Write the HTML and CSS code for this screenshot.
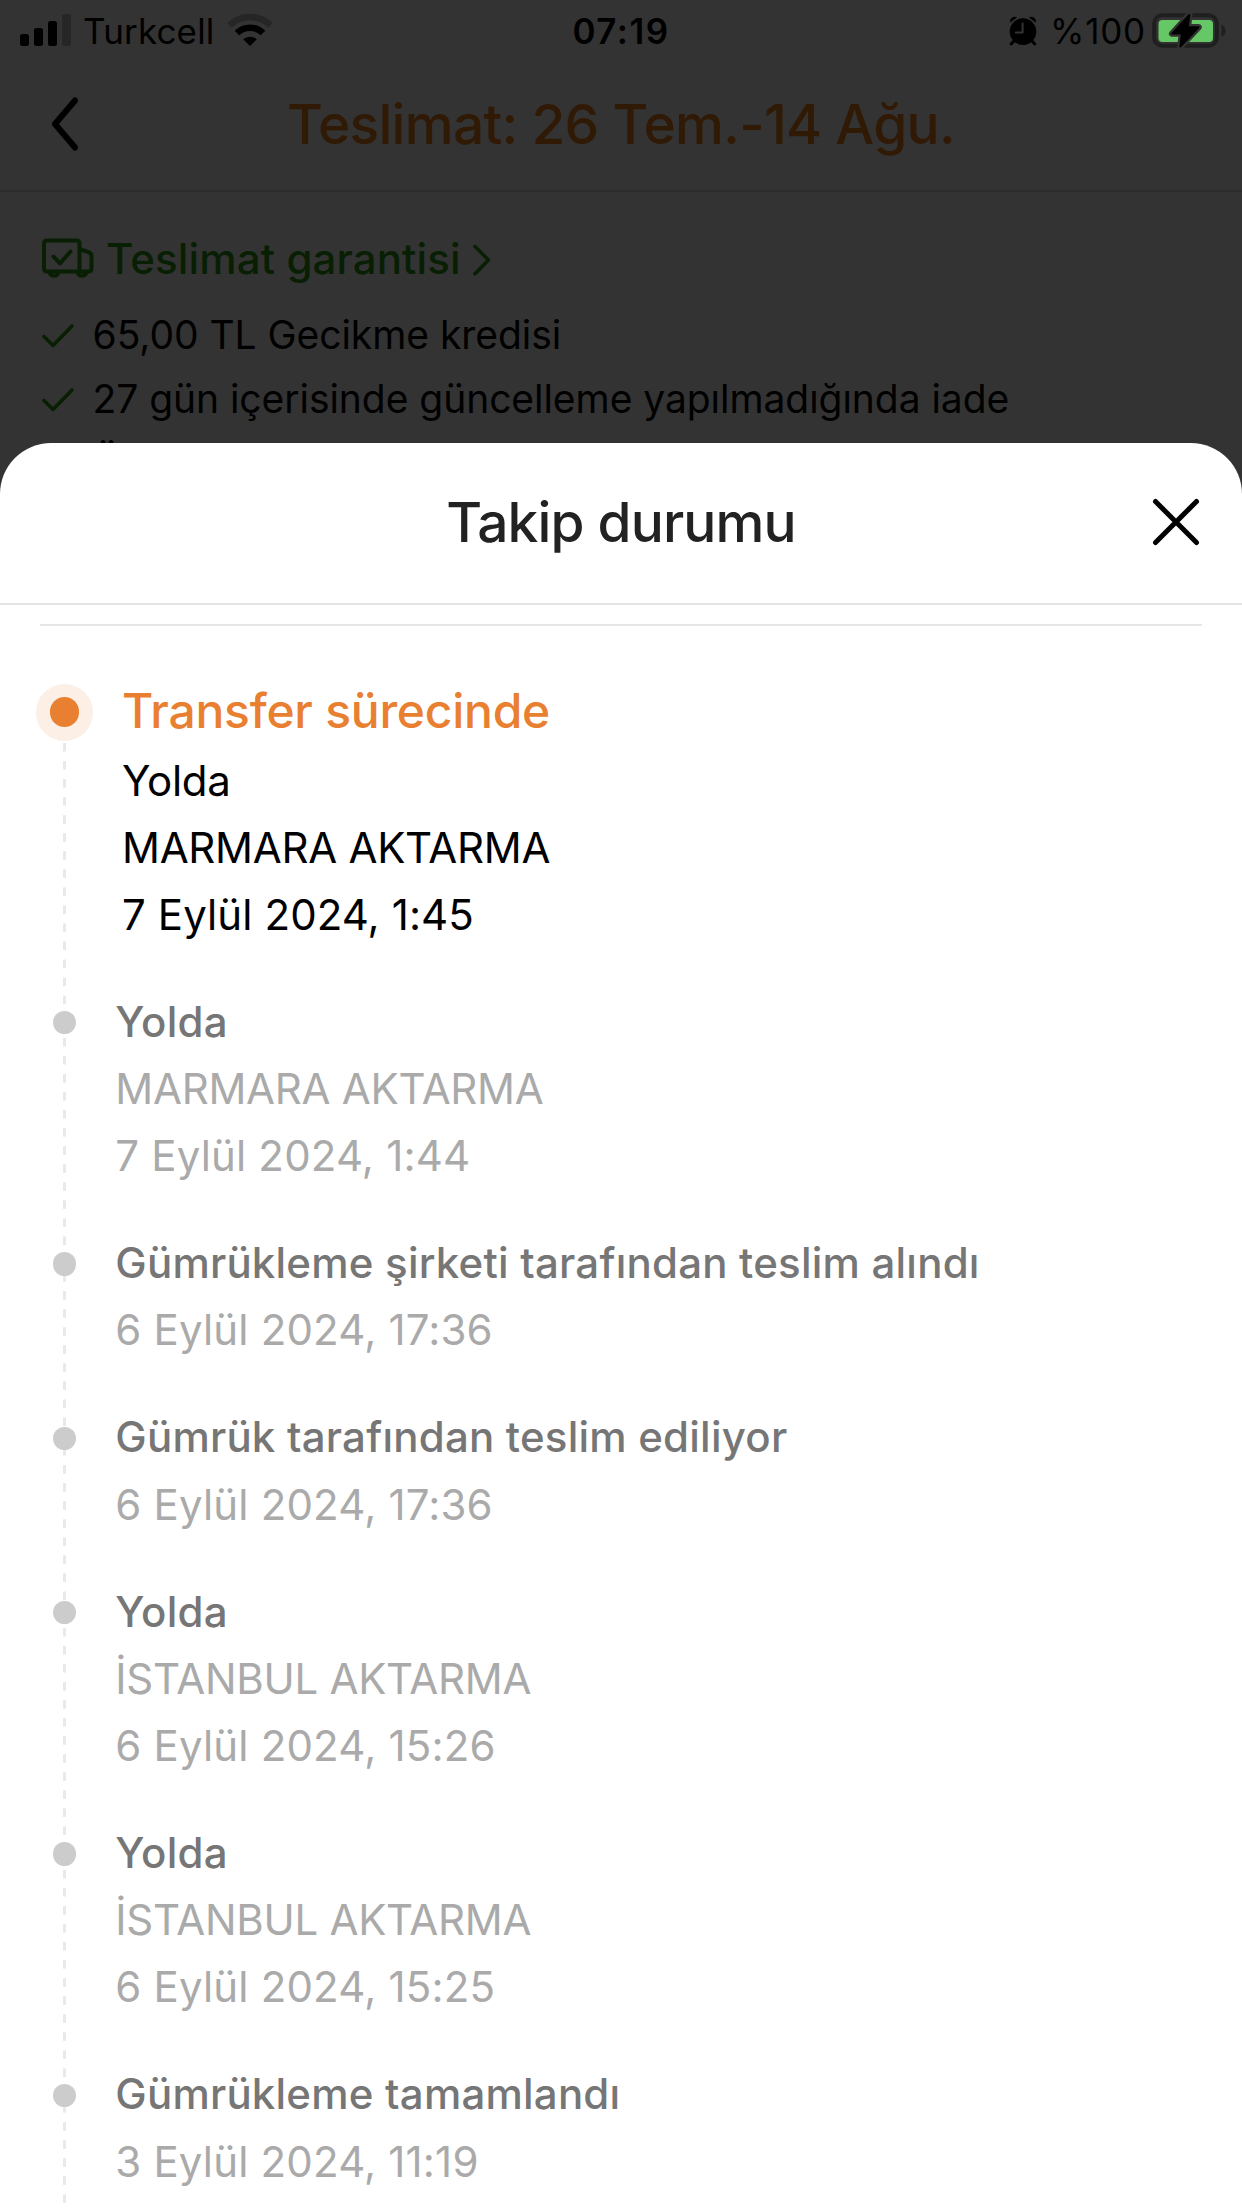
FILE: index.html
```html
<!DOCTYPE html>
<html lang="tr">
<head>
<meta charset="utf-8">
<title>Takip durumu</title>
<link rel="stylesheet" href="styles.css">
</head>
<body>
<div class="screen">
  <header class="status-bar">
    <div class="status-side">
      <svg class="signal" width="51" height="32" viewBox="0 0 51 32">
        <rect x="0" y="20" width="9" height="12" rx="2.5"/>
        <rect x="14" y="14" width="9" height="18" rx="2.5"/>
        <rect x="28" y="7" width="9" height="25" rx="2.5"/>
        <rect class="faint" x="42" y="0" width="9" height="32" rx="2.5"/>
      </svg>
      <span class="carrier">Turkcell</span>
      <svg class="wifi" width="46" height="33" viewBox="0 0 46 33">
        <path class="arc faint-arc" d="M2.5 12.4A29.3 29.3 0 0 1 43.5 12.4"/>
        <path class="arc" d="M10 20A18.7 18.7 0 0 1 36 20"/>
        <path d="M23 33L16.2 26.3A10 10 0 0 1 29.8 26.3Z"/>
      </svg>
    </div>
    <span class="clock">07:19</span>
    <div class="status-side status-right">
      <svg class="alarm" width="28" height="30" viewBox="0 0 28 30">
        <path class="legs" d="M5 25L2.2 28M23 25L25.8 28"/>
        <path d="M1.2 6.4A4.6 4.6 0 0 1 8 1.4ZM26.8 6.4A4.6 4.6 0 0 0 20 1.4Z"/>
        <circle cx="14" cy="15.6" r="13.3"/>
        <path class="hands" d="M13.6 7.5V16.6H6.8"/>
      </svg>
      <span class="percent">%100</span>
      <svg class="battery" width="74" height="36" viewBox="0 0 74 36">
        <rect class="shell" x="2.2" y="2.2" width="62.6" height="30.6" rx="8"/>
        <path class="shell-tip" d="M69.5 11.5Q73.5 13.5 73.5 17.5T69.5 24Z"/>
        <rect class="charge" x="6.5" y="7" width="54.5" height="22" rx="4"/>
        <path class="bolt-edge" d="M37.3 2L20.2 20.6H30L28.3 33.6L46.5 14.2H35.8Z"/>
        <path class="bolt" d="M37.3 2L20.2 20.6H30L28.3 33.6L46.5 14.2H35.8Z"/>
      </svg>
    </div>
  </header>

  <nav class="nav-bar">
    <svg class="back" width="28" height="54" viewBox="0 0 28 54"><path d="M24 3.5L4 27L24 50.5"/></svg>
    <h1 class="nav-title">Teslimat: 26 Tem.-14 Ağu.</h1>
  </nav>

  <section class="guarantee">
    <div class="guarantee-head">
      <svg class="truck" width="52" height="42" viewBox="0 0 52 42">
        <path d="M5 33.5Q2 33.5 2 30V5.5Q2 2.5 5 2.5H34.5Q37.5 2.5 37.5 5.5V33.5M37.5 11L46.5 14.2Q49.5 15.5 49.5 18V30.5Q49.5 33.5 46.5 33.5H5"/>
        <path d="M7.5 34.5A4.7 4.7 0 0 0 16.5 34.5M35.5 34.5A4.7 4.7 0 0 0 44.5 34.5"/>
        <path d="M11.5 18.5L18 25.5L28.5 13.5"/>
      </svg>
      <span class="guarantee-title">Teslimat garantisi</span>
      <svg class="more" width="18" height="32" viewBox="0 0 18 32"><path d="M2 2.5L15.5 16L2 29.7"/></svg>
    </div>
    <ul class="perks">
      <li class="perk"><svg class="tick" width="32" height="24" viewBox="0 0 32 24"><path d="M2 12.5L11 21.5L30 2"/></svg><span>65,00 TL Gecikme kredisi</span></li>
      <li class="perk"><svg class="tick" width="32" height="24" viewBox="0 0 32 24"><path d="M2 12.5L11 21.5L30 2"/></svg><span>27 gün içerisinde güncelleme yapılmadığında iade<br>Ü</span></li>
    </ul>
  </section>

  <main class="sheet">
    <div class="sheet-head">
      <h2 class="sheet-title">Takip durumu</h2>
      <svg class="close" width="48" height="48" viewBox="0 0 48 48"><path d="M3.5 3.5L44.5 44.5M44.5 3.5L3.5 44.5"/></svg>
    </div>
    <div class="rule"></div>
    <ol class="timeline">
      <li class="event current">
        <div class="marker"><i class="halo"></i><i class="rail"></i></div>
        <div class="info">
          <h3 class="stage">Transfer sürecinde</h3>
          <p class="place">Yolda</p>
          <p class="place">MARMARA AKTARMA</p>
          <p class="date">7 Eylül 2024, 1:45</p>
        </div>
      </li>
      <li class="event">
        <div class="marker"><i class="dot"></i><i class="rail"></i></div>
        <div class="info">
          <h3 class="name">Yolda</h3>
          <p class="place">MARMARA AKTARMA</p>
          <p class="date">7 Eylül 2024, 1:44</p>
        </div>
      </li>
      <li class="event short">
        <div class="marker"><i class="dot"></i><i class="rail"></i></div>
        <div class="info">
          <h3 class="name">Gümrükleme şirketi tarafından teslim alındı</h3>
          <p class="date">6 Eylül 2024, 17:36</p>
        </div>
      </li>
      <li class="event short">
        <div class="marker"><i class="dot"></i><i class="rail"></i></div>
        <div class="info">
          <h3 class="name">Gümrük tarafından teslim ediliyor</h3>
          <p class="date">6 Eylül 2024, 17:36</p>
        </div>
      </li>
      <li class="event">
        <div class="marker"><i class="dot"></i><i class="rail"></i></div>
        <div class="info">
          <h3 class="name">Yolda</h3>
          <p class="place">İSTANBUL AKTARMA</p>
          <p class="date">6 Eylül 2024, 15:26</p>
        </div>
      </li>
      <li class="event">
        <div class="marker"><i class="dot"></i><i class="rail"></i></div>
        <div class="info">
          <h3 class="name">Yolda</h3>
          <p class="place">İSTANBUL AKTARMA</p>
          <p class="date">6 Eylül 2024, 15:25</p>
        </div>
      </li>
      <li class="event short">
        <div class="marker"><i class="dot"></i><i class="rail"></i></div>
        <div class="info">
          <h3 class="name">Gümrükleme tamamlandı</h3>
          <p class="date">3 Eylül 2024, 11:19</p>
        </div>
      </li>
    </ol>
  </main>
</div>
</body>
</html>
```
FILE: styles.css
```css
* { box-sizing: border-box; margin: 0; padding: 0; }
body { font-family: Inter, "Noto Sans", sans-serif; background: #333; }
ul, ol { list-style: none; }
svg { display: block; flex: none; }

.screen {
  position: relative;
  width: 1242px;
  height: 2208px;
  overflow: hidden;
  background: #333;
  color: #000;
}

/* Status bar */
.status-bar {
  display: grid;
  grid-template-columns: 1fr auto 1fr;
  align-items: center;
  height: 58px;
  padding: 5px 16px 0 20px;
  font-size: 35px;
  line-height: 53px;
}
.status-side { display: flex; align-items: center; }
.status-right { justify-content: flex-end; }
.signal { margin-right: 12px; margin-top: -3px; }
.carrier { letter-spacing: 0.15px; }
.wifi { margin: -4px 0 0 13px; }
.clock { margin-right: 4px; font-weight: 600; letter-spacing: 1.45px; }
.percent { letter-spacing: 0.8px; margin: 0 6px 0 13px; }
.battery { margin-top: -2px; }
.alarm { margin-top: -2px; }
.faint { fill: #262626; }
.arc { fill: none; stroke: #000; stroke-width: 6.5; }
.faint-arc { stroke: #262626; }
.legs { stroke: #000; stroke-width: 3; stroke-linecap: round; }
.hands { fill: none; stroke: #333; stroke-width: 2; stroke-linecap: round; stroke-linejoin: round; }
.shell { fill: none; stroke: #1f1f1f; stroke-width: 4; }
.shell-tip { fill: #1f1f1f; }
.charge { fill: #66c766; }
.bolt-edge { fill: #333; stroke: #333; stroke-width: 6.5; stroke-linejoin: round; }
.bolt { fill: #000; stroke: #000; stroke-width: 2; stroke-linejoin: round; }

/* Navigation bar */
.nav-bar {
  display: grid;
  grid-template-columns: 28px 1fr 28px;
  align-items: center;
  height: 134px;
  padding: 0 51px;
  border-bottom: 2px solid #2d2d2d;
}
.back path { fill: none; stroke: #000; stroke-width: 6; stroke-linecap: round; stroke-linejoin: round; }
.nav-title {
  font-size: 55px;
  font-weight: 500;
  letter-spacing: -0.7px;
  text-align: center;
  color: #301a05;
}

/* Delivery guarantee */
.guarantee { padding: 36.7px 42px 0; }
.guarantee-head { display: flex; align-items: center; height: 60px; color: #081f04; }
.guarantee-title { margin: 0 12.5px 0 12px; font-size: 42px; font-weight: 500; letter-spacing: 0.13px; }
.truck path { fill: none; stroke: #081f04; stroke-width: 4; stroke-linejoin: round; stroke-linecap: round; }
.more { margin-top: 2px; }
.more path { fill: none; stroke: #081f04; stroke-width: 3.5; stroke-linecap: round; stroke-linejoin: round; }
.perks { margin-top: 14px; }
.perk { display: flex; font-size: 39px; line-height: 64px; letter-spacing: -0.05px; }
.tick { margin: 21px 18.5px 0 0; }
.tick path { fill: none; stroke: #081f04; stroke-width: 3.6; stroke-linecap: round; stroke-linejoin: round; }

/* Bottom sheet over the dimmed page */
.sheet {
  position: absolute;
  inset: 443px 0 0;
  overflow: hidden;
  border-radius: 51px 51px 0 0;
  background: #fff;
}
.sheet-head {
  display: grid;
  grid-template-columns: 48px 1fr 48px;
  align-items: center;
  height: 162px;
  padding: 0 42.5px 2px;
  border-bottom: 2px solid #e3e3e3;
}
.sheet-title {
  grid-column: 2;
  font-size: 55px;
  font-weight: 500;
  letter-spacing: -0.84px;
  text-align: center;
  color: #222;
}
.close path { fill: none; stroke: #000; stroke-width: 5; stroke-linecap: round; }
.rule { height: 2px; margin: 19px 40px 48.6px; background: #e6e6e6; }

/* Tracking timeline */
.event {
  display: grid;
  grid-template-columns: 57px 1fr;
  column-gap: 22.3px;
  padding-left: 36px;
}
.info { padding-bottom: 39.8px; font-size: 42px; line-height: 67.2px; color: #aaa; }
.name { font-size: 42px; font-weight: 500; letter-spacing: 0.22px; color: #767676; }
.place { letter-spacing: -0.28px; }
.date { letter-spacing: 0.18px; }

/* The marker column runs from its own dot down to the next one */
.marker {
  display: flex;
  flex-direction: column;
  align-items: center;
  margin: 23.2px 0 -23.2px;
}
.dot { flex: none; width: 23.4px; height: 23.4px; border-radius: 50%; background: #ccc; }
.rail {
  flex: 1;
  width: 3px;
  background: linear-gradient(#e9e9e9 9px, transparent 9px) 0 3.9px / 3px 18.05px;
}
.short .rail { background-position-y: -2.9px; }

.current { column-gap: 29px; }
.current .marker { margin-top: 9px; }
.current .rail { background-position-y: 2px; }
.current .info { color: #000; padding-bottom: 39.5px; }
.current .date { letter-spacing: 0.1px; }
.halo {
  flex: none;
  display: grid;
  place-items: center;
  width: 57px;
  height: 57px;
  border-radius: 50%;
  background: #fcf0e6;
}
.halo::before { content: ""; width: 29.5px; height: 29.5px; border-radius: 50%; background: #e97f30; }
.stage { font-size: 48px; font-weight: 500; line-height: 72px; letter-spacing: -0.25px; color: #e97f30; }
```
